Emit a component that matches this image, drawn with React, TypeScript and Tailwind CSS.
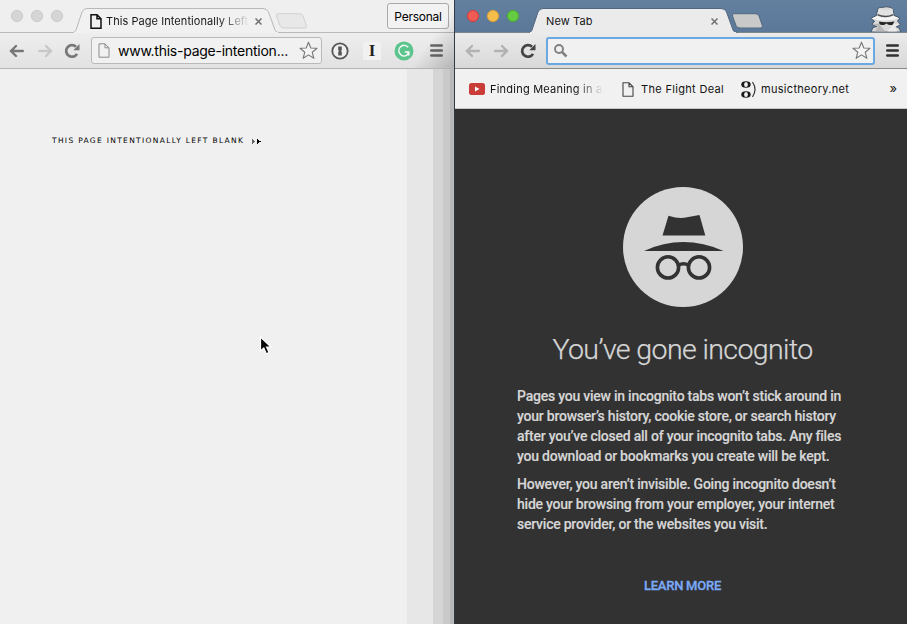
import React from "react";

const ui = "font-['Inter','Liberation_Sans',sans-serif]";

function Lights({ colors }: { colors: [string, string][] }) {
  return (
    <svg className="ml-[10px] mt-[9px] h-[14px] w-[54px] shrink-0" viewBox="0 0 54 14">
      {colors.map(([fill, stroke], i) => (
        <circle key={i} cx={7 + i * 20} cy="7" r="5.6" fill={fill} stroke={stroke} />
      ))}
    </svg>
  );
}

function TabShape({ fill, stroke, width }: { fill: string; stroke: string; width: number }) {
  const d = `M0 24.5 Q2 24.5 3 22 L9 4 Q10.5 .5 14 .5 H${width - 16} Q${width - 12} .5 ${width - 10.5} 4 L${width - 4} 22 Q${width - 3} 24.5 ${width} 24.5`;
  return (
    <svg className="absolute inset-0 h-[25px]" width={width} height="25" viewBox={`0 0 ${width} 25`}>
      <path d={d + " V25 H0 Z"} fill={fill} />
      <path d={d} fill="none" stroke={stroke} />
      <path d={`M1 24.5 H${width - 1}`} stroke={fill} />
    </svg>
  );
}

function NewTab({ fill, stroke }: { fill: string; stroke: string }) {
  return (
    <svg className="mt-[13px] h-4 w-[33px] shrink-0" viewBox="0 0 33 16">
      <path d="M3 .7 H24 Q27 .7 28 3 L31.5 13 Q32 15 29 15 H9 Q6 15 5 12.5 L1.5 3 Q1 .7 3 .7Z" fill={fill} stroke={stroke} />
    </svg>
  );
}

function Arrow({ color, right }: { color: string; right?: boolean }) {
  return (
    <svg className={right ? "h-[14px] w-4 shrink-0 -scale-x-100" : "h-[14px] w-4 shrink-0"} viewBox="0 0 16 14">
      <path d="M7 2 L2 7 L7 12 M2.5 7 H13.8" fill="none" stroke={color} strokeWidth="2.4" strokeLinecap="round" />
    </svg>
  );
}

function Reload({ color }: { color: string }) {
  return (
    <svg className="h-4 w-4 shrink-0" viewBox="0 0 16 16">
      <path d="M12 3.8 A5.8 5.8 0 1 0 13 10.8" fill="none" stroke={color} strokeWidth="2.7" />
      <path d="M15.5 1 V7.2 H9.3Z" fill={color} />
    </svg>
  );
}

function Page({ color, className, weight = 1.2 }: { color: string; className: string; weight?: number }) {
  return (
    <svg className={className} viewBox="0 0 12 15">
      <path d="M1 .8 H7 L11 4.8 V14.2 H1Z M7 .8 V4.8 H11" fill="none" stroke={color} strokeWidth={weight} />
    </svg>
  );
}

function Star() {
  return (
    <svg className="h-[19px] w-[19px] shrink-0" viewBox="0 0 19 19">
      <path d="M9.5 1.2 L11.8 7 L18 7.3 L13.2 11.2 L14.9 17.3 L9.5 13.9 L4.1 17.3 L5.8 11.2 L1 7.3 L7.2 7Z" fill="#f5f5f5" stroke="#777" strokeWidth="1.1" strokeLinejoin="round" />
    </svg>
  );
}

function Menu({ color }: { color: string }) {
  return (
    <svg className="h-[13px] w-[13px] shrink-0" viewBox="0 0 13 13">
      <path d="M1.3 1.5 H11.7 M1.3 6.5 H11.7 M1.3 11.5 H11.7" stroke={color} strokeWidth="2.6" strokeLinecap="round" />
    </svg>
  );
}

function Close() {
  return (
    <svg className="h-[7px] w-[7px] shrink-0" viewBox="0 0 7 7">
      <path d="M.5 .5 L6.5 6.5 M6.5 .5 L.5 6.5" stroke="#707070" strokeWidth="1.5" />
    </svg>
  );
}

function Spy() {
  return (
    <svg className="ml-auto mr-[5px] mt-[6px] h-[26px] w-[33px] shrink-0" viewBox="0 0 33 26">
      <path d="M2 26 L4 21.5 L8 20.5 L3 18.5 L5.5 15 L1.5 12.5 L7.5 9.5 L9 2.5 Q10.5 .8 13.5 1.4 Q17 .2 21 1.2 Q24.5 1.8 25 9.5 L31 12 L28.5 15 L31.5 18.5 L27 20.5 L30 22 L32 26Z" fill="#d9d9d9" stroke="#46576a" />
      <path d="M9.5 3 Q16 6 23.5 2.5 L24.5 9.5 Q16 13 8 9.5Z" fill="#e2e2e2" />
      <path d="M2.5 12.5 Q15 17 30 12.2 L24.5 10 Q16 13.2 8 10Z" fill="#f4f4f4" />
      <path d="M8.5 8.6 Q16 12.4 24.3 8.6" fill="none" stroke="#484c52" strokeWidth="1.3" />
      <path d="M10 15.6 Q17 17 25.5 15.6 L23.8 18.6 Q22 19.6 19 18.6 L17.5 17.4 L15.5 18.8 Q12 19.5 10.5 18.3Z" fill="#262626" />
      <path d="M3.5 18.5 L9.5 17.5 L16.5 25.5 H6 L9 20.8Z" fill="#b7b7b7" />
      <path d="M31 18.5 L25.5 17.5 L18 25.5 H28 L26 20.8Z" fill="#eaeaea" />
    </svg>
  );
}

function LeftWindow() {
  return (
    <section className="relative flex w-[454px] shrink-0 flex-col bg-[#f0f0f0]">
      <div className="flex h-[33px] shrink-0 border-b border-[#b9b9b9] bg-[#efefef]">
        <Lights colors={[["#d5d5d5", "#cacaca"], ["#d5d5d5", "#cacaca"], ["#d5d5d5", "#cacaca"]]} />
        <div className="relative ml-[9px] mt-2 h-[25px] w-[206px] shrink-0">
          <TabShape fill="#f1f1f1" stroke="#b9b9b9" width={206} />
          <div className="relative flex h-[25px] items-center pl-[17px] pt-px">
            <Page color="#111" weight={1.5} className="h-[15px] w-3 shrink-0" />
            <span className={`${ui} ml-[4px] w-[143px] shrink-0 whitespace-nowrap bg-linear-to-r from-[#161616] from-78% to-[#f1f1f1] bg-clip-text text-[11px] tracking-[0.06px] text-transparent`}>This Page Intentionally Left</span>
            <span className="ml-[6px] flex"><Close /></span>
          </div>
        </div>
        <div className="-ml-[4px] flex"><NewTab fill="#e8e8e8" stroke="#d0d0d0" /></div>
        <div className={`${ui} ml-auto mr-[5px] mt-[3px] flex h-[26px] w-[62px] shrink-0 items-center justify-center rounded-[3px] border border-[#a9a9a9] bg-[#f2f2f2] pt-px text-[12px] tracking-[-0.25px] text-black`}>Personal</div>
      </div>
      <div className="flex h-9 shrink-0 items-center border-b border-[#b5b5b5] bg-linear-to-b from-[#eeeeee] to-[#e2e2e2] pl-[9px]">
        <Arrow color="#777" />
        <span className="ml-3 flex"><Arrow color="#c8c8c8" right /></span>
        <span className="ml-[11px] flex"><Reload color="#777" /></span>
        <div className="ml-[11px] flex h-[27px] w-[231px] shrink-0 items-center rounded-[3px] border border-[#b9b9b9] bg-[#f1f1f1] pl-[6px] pr-[3px]">
          <Page color="#8b8b8b" weight={1} className="h-[15px] w-3 shrink-0" />
          <span className={`${ui} ml-[8px] whitespace-nowrap text-[14px] tracking-[-0.25px] text-black`}>www.this-page-intention...</span>
          <span className="ml-auto flex"><Star /></span>
        </div>
        <svg className="ml-[9px] h-[18px] w-[18px] shrink-0" viewBox="0 0 18 18">
          <circle cx="9" cy="9" r="7.7" fill="#efefef" stroke="#555" strokeWidth="1.8" />
          <path d="M7.2 4.5 H10.8 V8 L10 9 L10.8 10 V13.5 H7.2 V10 L8 9 L7.2 8Z" fill="#555" />
        </svg>
        <span className="ml-[14px] flex h-[18px] w-[18px] shrink-0 items-center justify-center bg-[#f1f1f1] pt-px font-['Liberation_Serif',serif] text-[17px] font-bold text-[#222]">I</span>
        <svg className="ml-[13px] h-[20px] w-[20px] shrink-0" viewBox="0 0 20 20">
          <circle cx="10" cy="10" r="9.5" fill="#5cc58d" />
          <path d="M14.2 6.2 A5.3 5.3 0 1 0 12.6 14.4 M10.8 11 H14.8 V14.6 M14.6 11.2 Q14 13.4 12.4 14.4" fill="none" stroke="#f7faf8" strokeWidth="1.5" />
        </svg>
        <span className="ml-[16px] flex"><Menu color="#686868" /></span>
      </div>
      <main className="flex grow">
        <div className="grow pl-[52px] pt-[66px]">
          <p className="flex items-center whitespace-nowrap font-['DejaVu_Sans',sans-serif] text-[7.5px] leading-[12px] tracking-[1.32px] text-black">
            THIS PAGE INTENTIONALLY LEFT BLANK
            <svg className="ml-[8px] h-[5px] w-[9px]" viewBox="0 0 9 5" shapeRendering="crispEdges">
              <path d="M0 0 L3 2.5 L0 5Z" fill="#666" /><path d="M5 0 L9 2.5 L5 5Z" fill="#000" />
            </svg>
          </p>
        </div>
        <div className="w-[26px] bg-[#e7e7e7]" />
        <div className="w-[10px] bg-[#d5d5d5]" />
        <div className="w-[7px] bg-[#c9c9c9]" />
        <div className="w-[4px] bg-[#b9b9b9]" />
      </main>
      <div className="pointer-events-none absolute right-0 top-0 h-[68px] w-[48px] bg-linear-to-br from-transparent from-55% to-black/20" />
      <svg className="absolute left-[258px] top-[335px] h-[22px] w-[16px]" viewBox="0 0 16 22">
        <path d="M2.5 2 V16 L5.8 13 L8.3 18.8 L11 17.6 L8.6 12 H13Z" fill="#0a0a0a" stroke="#fff" strokeWidth="1.2" />
      </svg>
    </section>
  );
}

function IncognitoLogo() {
  return (
    <svg className="h-[120px] w-[120px]" viewBox="0 0 120 120">
      <circle cx="60" cy="60" r="60" fill="#d6d6d6" />
      <g fill="#323232">
        <path d="M39.5 48.5 L45.5 28.7 Q56 32.3 64 30.3 L76.5 28 L82.3 48.5Z" />
        <path d="M21 64 Q60 46.2 100.5 64Z" />
      </g>
      <g fill="none" stroke="#323232" strokeWidth="3.6">
        <circle cx="45" cy="80.4" r="10.6" /><circle cx="76" cy="80.4" r="10.6" />
        <path d="M55.5 78.3 Q60.5 75.2 65.5 78.3" />
      </g>
    </svg>
  );
}

function RightWindow() {
  return (
    <section className="flex w-[453px] shrink-0 flex-col border-l border-[#2f3c46] bg-[#323232]">
      <div className="flex h-[33px] shrink-0 border-b border-[#7d858d] bg-linear-to-b from-[#64809f] to-[#5b7899] pl-px">
        <Lights colors={[["#ee5b54", "#cf3d38"], ["#f5bd4a", "#dba03a"], ["#65cb43", "#47a92c"]]} />
        <div className="relative ml-[9px] mt-2 h-[25px] w-[208px] shrink-0">
          <TabShape fill="#ebebeb" stroke="#52677e" width={208} />
          <div className="relative flex h-[25px] items-center pl-[17px] pt-px">
            <span className={`${ui} w-[162px] text-[11px] tracking-[0.1px] text-[#161616]`}>New Tab</span>
            <span className="ml-[3px] flex"><Close /></span>
          </div>
        </div>
        <div className="-ml-[6px] flex"><NewTab fill="#c9c9c9" stroke="#536a82" /></div>
        <Spy />
      </div>
      <div className="flex h-9 shrink-0 items-center border-b border-[#8a8a8a] bg-linear-to-b from-[#ebebeb] to-[#d8d8d8] pl-[10px] pr-[8px]">
        <Arrow color="#b2b2b2" />
        <span className="ml-3 flex"><Arrow color="#b2b2b2" right /></span>
        <span className="ml-[11px] flex"><Reload color="#444" /></span>
        <div className="ml-[10px] flex h-[28px] w-[329px] shrink-0 items-center rounded-[3px] border-2 border-[#6aa8e2] bg-[#f1f1f1] pl-[5px] pr-px">
          <svg className="h-[15px] w-[15px]" viewBox="0 0 15 15">
            <circle cx="6" cy="6" r="4" fill="none" stroke="#808080" strokeWidth="1.9" />
            <path d="M9 9 L13.5 13.5" stroke="#808080" strokeWidth="2.5" />
          </svg>
          <span className="ml-auto mr-px flex"><Star /></span>
        </div>
        <span className="ml-auto flex"><Menu color="#303030" /></span>
      </div>
      <nav className={`${ui} flex h-10 shrink-0 items-center border-b border-[#c4c9c4] bg-[#f1f1f1] pl-[14px] pr-[10px] pt-px text-[11px] text-[#111]`}>
        <svg className="h-[12px] w-[16px] shrink-0" viewBox="0 0 16 12">
          <rect width="16" height="12" rx="2.5" fill="#c93c37" /><path d="M6 3.5 L10.5 6 L6 8.5Z" fill="#fff" />
        </svg>
        <span className="ml-[5px] w-[113px] shrink-0 whitespace-nowrap bg-linear-to-r from-[#111] from-75% to-[#f1f1f1] bg-clip-text tracking-[0.22px] text-transparent">Finding Meaning in a</span>
        <Page color="#444" weight={1.1} className="ml-[19px] h-[15px] w-3 shrink-0" />
        <span className="ml-[7px] w-[83px] shrink-0 whitespace-nowrap tracking-[0.32px]">The Flight Deal</span>
        <svg className="ml-[17px] h-[17px] w-[16px] shrink-0" viewBox="0 0 16 17">
          <g fill="#1a1a1a"><ellipse cx="5" cy="3.5" rx="4.7" ry="3.2" /><ellipse cx="5" cy="13.5" rx="4.7" ry="3.2" /></g>
          <g fill="#f1f1f1"><ellipse cx="5" cy="3.5" rx="1.9" ry="2.6" /><ellipse cx="5" cy="13.5" rx="1.9" ry="2.6" /></g>
          <path d="M11.5 1 Q16.5 8.5 11.5 16" fill="none" stroke="#333" strokeWidth="1.2" />
        </svg>
        <span className="ml-[4px] tracking-[0.3px]">musictheory.net</span>
        <span className="ml-auto text-[13px]">»</span>
      </nav>
      <main className="flex grow flex-col items-center pt-[78px] pl-[3px] font-['Roboto',sans-serif] text-[#d6d6d6]">
        <IncognitoLogo />
        <h1 className="mt-[25px] whitespace-nowrap text-[28.5px] font-light leading-[36px] tracking-[-0.6px] [-webkit-text-stroke:0.25px_#d6d6d6]">You’ve gone incognito</h1>
        <div className="mt-[18px] w-[331px] whitespace-nowrap text-[14px] font-medium leading-5 tracking-[-0.23px] [-webkit-text-stroke:0.15px_#d6d6d6]">
          <p>Pages you view in incognito tabs won’t stick around in<br />your browser’s history, cookie store, or search history<br />after you’ve closed all of your incognito tabs. Any files<br />you download or bookmarks you create will be kept.</p>
          <p className="mt-2">However, you aren’t invisible. Going incognito doesn’t<br />hide your browsing from your employer, your internet<br />service provider, or the websites you visit.</p>
        </div>
        <a className="mt-[42px] text-[13px] font-medium leading-5 tracking-[-0.25px] text-[#7baaf7] [-webkit-text-stroke:0.3px_#7baaf7]">LEARN MORE</a>
      </main>
    </section>
  );
}

export default function App() {
  return (
    <div className="flex h-[624px] w-[907px] overflow-hidden">
      <LeftWindow />
      <RightWindow />
    </div>
  );
}
